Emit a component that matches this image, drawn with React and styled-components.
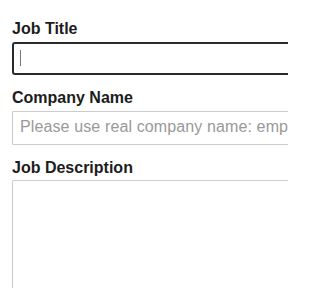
import React from "react";
import styled, { createGlobalStyle } from "styled-components";

const Global = createGlobalStyle`
  html, body {
    margin: 0;
    padding: 0;
    background: #ffffff;
    overflow: hidden;
  }
  body {
    font-family: "Liberation Sans", Arial, sans-serif;
  }
`;

const Page = styled.div`
  width: 288px;
  height: 288px;
  overflow: hidden;
  background: #fff;
`;

const Form = styled.form`
  display: flex;
  flex-direction: column;
  gap: 14px;
  padding: 20px 0 0 12px;
`;

const Field = styled.div`
  display: flex;
  flex-direction: column;
  gap: ${(p) => p.$gap || "4px"};
`;

const Label = styled.label`
  display: block;
  font-size: 16px;
  font-weight: bold;
  line-height: 18px;
  color: #1c1c1c;
`;

const InputWrap = styled.div`
  position: relative;
`;

const TextInput = styled.input`
  box-sizing: border-box;
  width: 320px;
  height: ${(p) => (p.$focused ? "33px" : "34px")};
  margin: 0;
  padding: 0 0 ${(p) => (p.$focused ? "0" : "3px")} ${(p) => (p.$focused ? "6px" : "7px")};
  border: ${(p) => (p.$focused ? "2px solid #2b2b2b" : "1px solid #cccccc")};
  border-radius: ${(p) => (p.$focused ? "3px" : "1px")};
  font-family: "Liberation Sans", Arial, sans-serif;
  font-size: 16px;
  letter-spacing: 0.12px;
  color: #333;
  background: #fff;
  outline: none;
  caret-color: transparent;
  &::placeholder {
    color: #999;
  }
`;

const Caret = styled.span`
  position: absolute;
  left: 8px;
  top: 8px;
  width: 1px;
  height: 16px;
  background: #777;
`;

const TextArea = styled.textarea`
  box-sizing: border-box;
  width: 320px;
  height: 200px;
  margin: 0;
  padding: 6px 7px;
  border: 1px solid #cccccc;
  border-radius: 1px;
  font-family: "Liberation Sans", Arial, sans-serif;
  font-size: 16px;
  resize: none;
  outline: none;
  background: #fff;
`;

export default function App() {
  return (
    <>
      <Global />
      <Page>
        <Form onSubmit={(e) => e.preventDefault()}>
          <Field>
            <Label htmlFor="job-title">Job Title</Label>
            <InputWrap>
              <TextInput id="job-title" type="text" $focused />
              <Caret />
            </InputWrap>
          </Field>
          <Field>
            <Label htmlFor="company">Company Name</Label>
            <TextInput
              id="company"
              type="text"
              placeholder="Please use real company name: employers will see this"
            />
          </Field>
          <Field $gap="3px">
            <Label htmlFor="desc">Job Description</Label>
            <TextArea id="desc" />
          </Field>
        </Form>
      </Page>
    </>
  );
}
